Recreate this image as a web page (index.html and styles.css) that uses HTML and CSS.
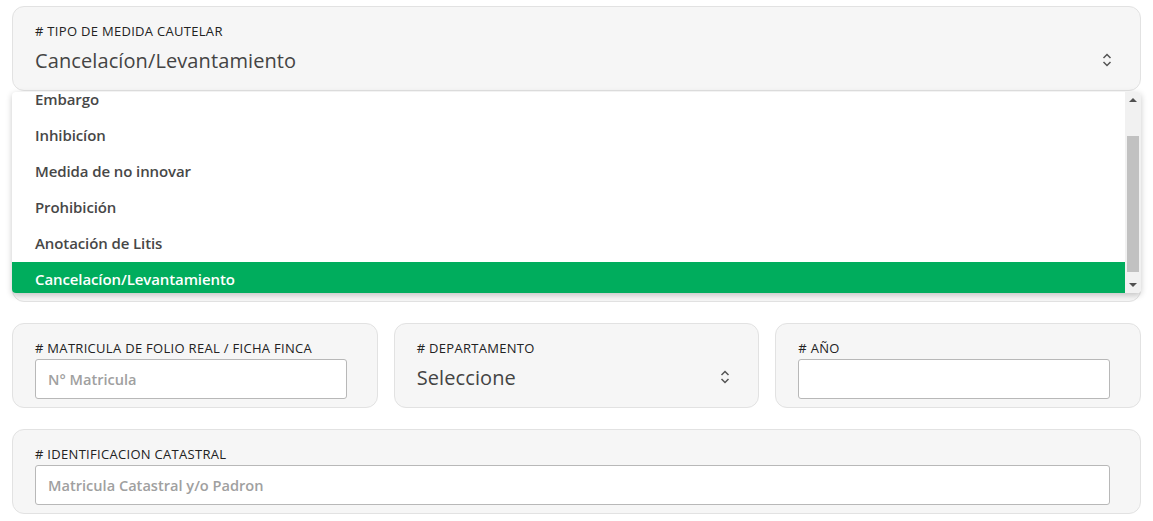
FILE: index.html
```html
<!DOCTYPE html>
<html lang="es">
<head>
<meta charset="utf-8">
<link rel="stylesheet" href="styles.css">
</head>
<body>
<div class="form">
  <div class="field-wrap">
    <div class="card card-select">
      <label class="label"># TIPO DE MEDIDA CAUTELAR</label>
      <div class="select">
        <span class="select-value">Cancelacíon/Levantamiento</span>
        <svg class="chev" width="10" height="14" viewBox="0 0 10 14"><polyline points="1.5,5 5,1.5 8.5,5" fill="none" stroke="#555" stroke-width="1.5"/><polyline points="1.5,9 5,12.5 8.5,9" fill="none" stroke="#555" stroke-width="1.5"/></svg>
      </div>
    </div>
    <div class="dropdown">
      <div class="options">
        <ul class="option-list">
          <li>Embargo</li>
          <li>Inhibicíon</li>
          <li>Medida de no innovar</li>
          <li>Prohibición</li>
          <li>Anotación de Litis</li>
          <li class="selected">Cancelacíon/Levantamiento</li>
        </ul>
      </div>
      <div class="scrollbar">
        <span class="arrow up"></span>
        <div class="track"><div class="thumb"></div></div>
        <span class="arrow down"></span>
      </div>
    </div>
  </div>

  <div class="card card-hidden"></div>

  <div class="row">
    <div class="card">
      <label class="label"># MATRICULA DE FOLIO REAL / FICHA FINCA</label>
      <input class="input" type="text" placeholder="N° Matricula">
    </div>
    <div class="card card-select">
      <label class="label"># DEPARTAMENTO</label>
      <div class="select">
        <span class="select-value">Seleccione</span>
        <svg class="chev" width="10" height="14" viewBox="0 0 10 14"><polyline points="1.5,5 5,1.5 8.5,5" fill="none" stroke="#555" stroke-width="1.5"/><polyline points="1.5,9 5,12.5 8.5,9" fill="none" stroke="#555" stroke-width="1.5"/></svg>
      </div>
    </div>
    <div class="card">
      <label class="label"># AÑO</label>
      <input class="input" type="text">
    </div>
  </div>

  <div class="card">
    <label class="label"># IDENTIFICACION CATASTRAL</label>
    <input class="input" type="text" placeholder="Matricula Catastral y/o Padron">
  </div>
</div>
</body>
</html>
```

FILE: styles.css
```css
* { box-sizing: border-box; }
html, body { margin: 0; background: #fff; }
body {
  font-family: "Open Sans", "Noto Sans", sans-serif;
  color: #333;
  padding: 6px 12px 0 12px;
}
.form {
  width: 1129px;
  display: flex;
  flex-direction: column;
  gap: 21px;
}
.field-wrap { position: relative; }
.card {
  background: #f6f6f6;
  border: 1px solid #e2e2e2;
  border-radius: 12px;
  height: 85px;
  padding: 16px 30px 0 22px;
  display: flex;
  flex-direction: column;
}
.card-select { padding-right: 28px; }
.card-hidden { height: 190px; }
.label {
  font-size: 13px;
  font-weight: 500;
  color: #222;
  line-height: 16px;
  height: 16px;
  letter-spacing: 0.3px;
  white-space: nowrap;
}
.select {
  display: flex;
  align-items: center;
  justify-content: space-between;
  height: 36px;
  margin-top: 3px;
}
.select-value {
  font-size: 20px;
  font-weight: 500;
  color: #444;
  letter-spacing: 0.1px;
}
.chev { display: block; }
.input {
  margin-top: 3px;
  height: 40px;
  border: 1px solid #b8b8b8;
  border-radius: 3px;
  background: #fff;
  padding: 0 12px;
  font-family: inherit;
  font-size: 14.6px;
  font-weight: 600;
  color: #444;
  outline: none;
  width: 100%;
}
.input::placeholder { color: #a0a0a0; }
.row {
  display: grid;
  grid-template-columns: 1fr 1fr 1fr;
  gap: 16px;
}
.dropdown {
  position: absolute;
  left: 0;
  top: 86px;
  width: 1129px;
  height: 201px;
  background: #fff;
  border-radius: 4px;
  box-shadow: 0 2px 6px rgba(0,0,0,0.22);
  display: flex;
  overflow: hidden;
  z-index: 2;
}
.options { flex: 1; overflow: hidden; }
.option-list {
  list-style: none;
  margin: -10px 0 0 0;
  padding: 0;
}
.option-list li {
  height: 36px;
  line-height: 35px;
  padding-left: 23px;
  font-size: 15px;
  font-weight: 600;
  color: #474747;
  letter-spacing: -0.1px;
}
.option-list li.selected {
  background: #00ad5d;
  color: #fff;
}
.scrollbar {
  width: 16px;
  background: #f1f1f1;
  display: flex;
  flex-direction: column;
  align-items: center;
}
.arrow {
  width: 0; height: 0;
  border-left: 4px solid transparent;
  border-right: 4px solid transparent;
  margin: 6px 0;
}
.arrow.up { border-bottom: 4px solid #505050; }
.arrow.down { border-top: 4px solid #505050; }
.track { flex: 1; width: 100%; padding: 0 2px; }
.thumb { margin-top: 28px; height: 136px; background: #c1c1c1; }
```
